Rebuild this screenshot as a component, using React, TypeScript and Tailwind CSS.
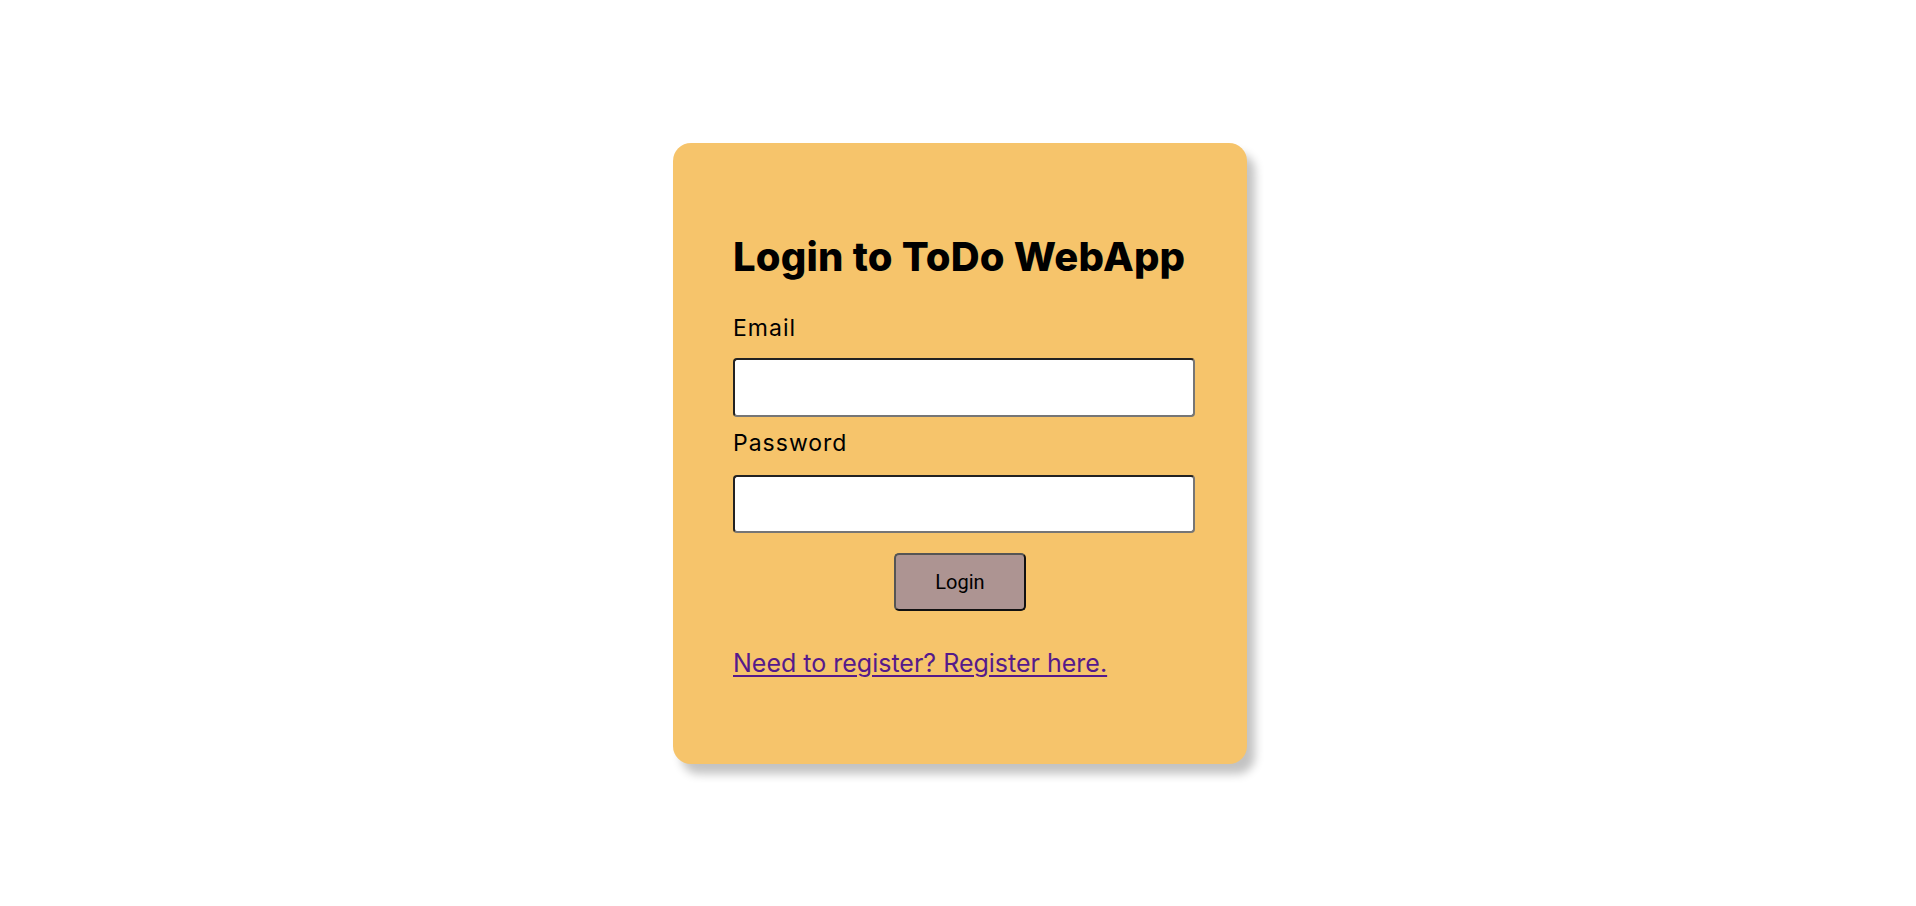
import React from "react";

export default function App() {
  const font = { fontFamily: "Inter, 'Open Sans', sans-serif" };
  return (
    <div className="w-full h-[906px] bg-white flex items-center justify-center" style={font}>
      <div className="ml-[4px] w-[574px] h-[621px] rounded-[18px] bg-[#f6c46b] shadow-[8px_10px_10px_rgba(0,0,0,0.24)] px-[60px] pt-[90px] flex flex-col">
        <h1 className="text-[40px] leading-[48px] font-extrabold text-black tracking-[0.2px] whitespace-nowrap">Login to ToDo WebApp</h1>
        <label className="mt-[33px] text-[23px] leading-[28px] tracking-[1px] text-black">Email</label>
        <input type="email" className="mt-[16px] w-[462px] h-[59px] bg-white rounded-[4px] border-2 border-t-[#222] border-l-[#222] border-b-[#767676] border-r-[#767676] outline-none" />
        <label className="mt-[12px] text-[23px] leading-[28px] tracking-[1px] text-black">Password</label>
        <input type="password" className="mt-[18px] w-[462px] h-[58px] bg-white rounded-[4px] border-2 border-t-[#222] border-l-[#222] border-b-[#767676] border-r-[#767676] outline-none" />
        <div className="mt-[20px] flex justify-center">
          <button className="w-[132px] h-[58px] rounded-[5px] bg-[#ad9492] border-2 border-t-[#555] border-l-[#555] border-b-[#111] border-r-[#111] text-[20px] text-black" style={{ fontFamily: "Roboto, 'Liberation Sans', sans-serif" }}>
            Login
          </button>
        </div>
        <a href="#" className="mt-[36px] text-[25px] leading-[32px] text-[#551a8b] underline underline-offset-[3px] decoration-[2px] whitespace-nowrap">
          Need to register? Register here.
        </a>
      </div>
    </div>
  );
}
